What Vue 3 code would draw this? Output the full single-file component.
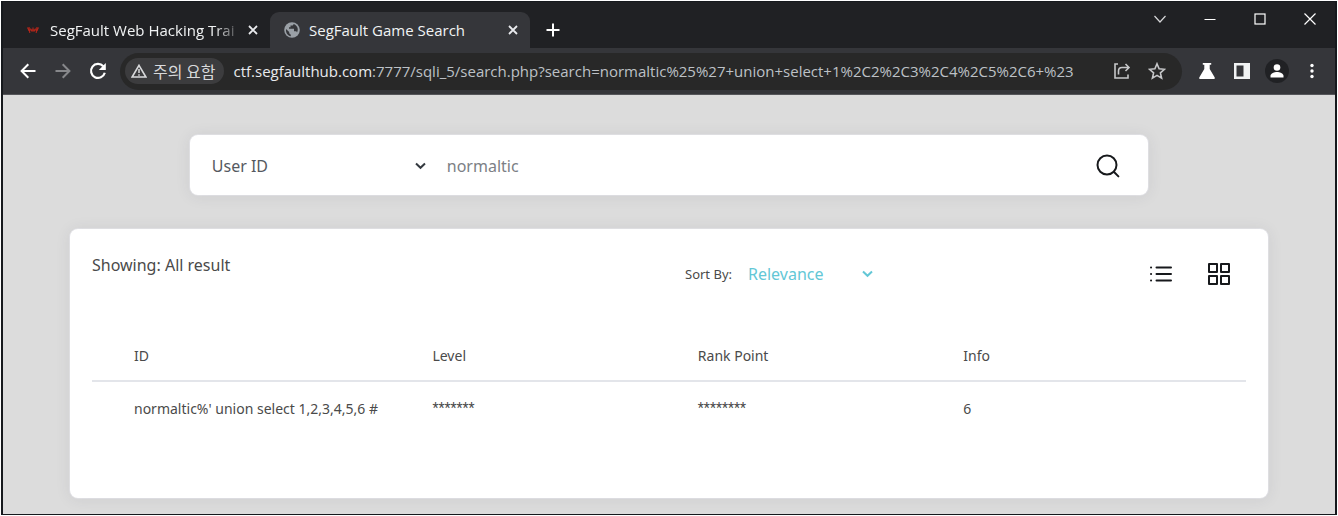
<script setup>
import { ref } from 'vue'

const field = ref('User ID')
const keyword = ref('')
const sort = ref('Relevance')
const address = ref('/sqli_5/search.php?search=normaltic%25%27+union+select+1%2C2%2C3%2C4%2C5%2C6+%23')
const columns = ['ID', 'Level', 'Rank Point', 'Info']
const rows = [["normaltic%' union select 1,2,3,4,5,6 #", '*******', '********', '6']]
const isMasked = (text) => /^\*+$/.test(text)
</script>

<template>
  <div class="window">
    <header class="tabstrip">
      <div class="tab">
        <svg class="favicon" viewBox="0 0 16 16" aria-hidden="true">
          <path d="M2.500 5.500l1.700 3.500M4 5l.8 6M5.500 6.500L7 9.500M8 5.500v4M10.500 6.500L9 9.500M12 5l-.8 6M13.500 5.500L11.800 9M3 8h10" fill="none" stroke="#b3261a" stroke-width="1.100" />
        </svg>
        <span class="tab-title fade">SegFault Web Hacking Trai</span>
        <button class="tab-close" aria-label="Close tab">
          <svg width="10" height="10" viewBox="0 0 10 10"><path d="M1 1l8 8M9 1l-8 8" stroke="#e8eaed" stroke-width="1.8" /></svg>
        </button>
      </div>
      <div class="tab active">
        <svg class="favicon" viewBox="0 0 16 16" aria-hidden="true">
          <circle cx="8" cy="8" r="7.8" fill="#9aa0a6" />
          <path d="M2 7l3.200 3v1.200l1.600 1.600v1.400C4 13.800 1.500 11 2 7zM9.500 2c0 1-.8 1.600-1.600 1.600H6.500V5.200H5v1.500h5v2.500h1.500c.8 0 1.300.5 1.500 1.200C14.800 7.500 13.500 3.200 9.500 2z" fill="#35363a" />
        </svg>
        <span class="tab-title">SegFault Game Search</span>
        <button class="tab-close" aria-label="Close tab">
          <svg width="10" height="10" viewBox="0 0 10 10"><path d="M1 1l8 8M9 1l-8 8" stroke="#e8eaed" stroke-width="1.8" /></svg>
        </button>
      </div>
      <button class="new-tab" aria-label="New tab">
        <svg width="14" height="14" viewBox="0 0 14 14"><path d="M7 0.500v13M0.500 7h13" stroke="#fff" stroke-width="2" /></svg>
      </button>
      <div class="caption">
        <button aria-label="Search tabs">
          <svg width="12" height="12" viewBox="0 0 12 12"><path d="M0.500 3l5.500 6 5.500-6" fill="none" stroke="#d5d6d8" stroke-width="1.200" /></svg>
        </button>
        <button aria-label="Minimize">
          <svg width="12" height="12" viewBox="0 0 12 12"><path d="M0.500 6.500h11" stroke="#fff" stroke-width="1" /></svg>
        </button>
        <button aria-label="Maximize">
          <svg width="12" height="12" viewBox="0 0 12 12"><rect x="1" y="1" width="10" height="10" fill="none" stroke="#fff" stroke-width="1.200" /></svg>
        </button>
        <button aria-label="Close">
          <svg width="12" height="12" viewBox="0 0 12 12"><path d="M0.500 0.500l11 11M11.500 0.500l-11 11" stroke="#fff" stroke-width="1.200" /></svg>
        </button>
      </div>
    </header>

    <nav class="toolbar">
      <div class="nav-buttons">
        <button aria-label="Back">
          <svg width="16" height="16" viewBox="0 0 16 16"><path d="M15.500 8H2M8.300 1.300L1.600 8l6.700 6.700" fill="none" stroke="#fff" stroke-width="2" /></svg>
        </button>
        <button aria-label="Forward">
          <svg width="16" height="16" viewBox="0 0 16 16"><path d="M0.500 8H14M7.700 1.300L14.400 8l-6.700 6.700" fill="none" stroke="#87888b" stroke-width="2" /></svg>
        </button>
        <button aria-label="Reload">
          <svg width="18" height="18" viewBox="0 0 18 18"><path d="M14.300 4.300A7 7 0 1 0 15.800 10.800" fill="none" stroke="#fff" stroke-width="2.200" /><path d="M16.800 1v7h-7z" fill="#fff" /></svg>
        </button>
      </div>
      <div class="omnibox">
        <button class="chip">
          <svg width="16" height="14" viewBox="0 0 16 14"><path d="M8 1.300L14.900 13H1.100z" fill="none" stroke="#d8d9db" stroke-width="1.600" /><path d="M8 5v4M8 10.200v1.500" stroke="#d8d9db" stroke-width="1.500" /></svg>
          <span>주의 요함</span>
        </button>
        <div class="url"><span class="host">ctf.segfaulthub.com</span>:7777{{ address }}</div>
        <button class="omni-action" aria-label="Share">
          <svg width="18" height="18" viewBox="0 0 18 18"><path d="M5 2H2v14h13v-3.500M5.500 12.500V9c0-2 1-3.500 3.500-3.500H15M12.500 2l3.500 3.500L12.500 9" fill="none" stroke="#c6c7c9" stroke-width="1.600" /></svg>
        </button>
        <button class="omni-action" aria-label="Bookmark">
          <svg width="18" height="18" viewBox="0 0 18 18"><path d="M9 1.800l2.100 5 5.400.5-4.100 3.600 1.200 5.300L9 13.400l-4.600 2.800 1.200-5.300-4.100-3.600 5.400-.5z" fill="none" stroke="#c6c7c9" stroke-width="1.600" /></svg>
        </button>
      </div>
      <div class="tools">
        <button aria-label="Experiments">
          <svg width="16" height="16" viewBox="0 0 16 16"><path d="M3.800 0h8.400v1.800h-1.500V6l4.900 8.200c.5.900.1 1.800-.8 1.800H1.200c-.9 0-1.300-.9-.8-1.800L5.300 6V1.800H3.800z" fill="#fff" /></svg>
        </button>
        <button aria-label="Side panel">
          <svg width="16" height="16" viewBox="0 0 16 16"><path d="M0 0h16v16H0zM2.500 2.500v11h7v-11z" fill="#f1f3f4" fill-rule="evenodd" /></svg>
        </button>
        <button aria-label="Profile">
          <svg width="24" height="24" viewBox="0 0 24 24"><circle cx="12" cy="12" r="12" fill="#202124" /><circle cx="12" cy="8.500" r="3.300" fill="#fff" /><path d="M5.500 18.500v-1.800c0-2.300 4-3.700 6.500-3.700s6.500 1.400 6.500 3.700v1.800z" fill="#fff" /></svg>
        </button>
        <button aria-label="Menu">
          <svg width="16" height="16" viewBox="0 0 16 16"><circle cx="8" cy="2.500" r="1.700" fill="#fff" /><circle cx="8" cy="8" r="1.700" fill="#fff" /><circle cx="8" cy="13.500" r="1.700" fill="#fff" /></svg>
        </button>
      </div>
    </nav>

    <main class="page">
      <form class="search" @submit.prevent>
        <div class="select-wrap field">
          <select v-model="field" aria-label="Search field">
            <option>User ID</option>
          </select>
          <svg width="11" height="8" viewBox="0 0 11 8"><path d="M1 1.500l4.500 4.300L10 1.500" fill="none" stroke="#343a40" stroke-width="2" /></svg>
        </div>
        <input v-model="keyword" type="text" placeholder="normaltic" aria-label="Search keyword" />
        <button class="search-button" aria-label="Search">
          <svg width="24" height="24" viewBox="0 0 24 24"><circle cx="11" cy="11" r="9.500" fill="none" stroke="#17191c" stroke-width="2" /><path d="M17.800 17.800l4.600 4.600" stroke="#17191c" stroke-width="2" stroke-linecap="round" /></svg>
        </button>
      </form>

      <section class="card">
        <div class="card-head">
          <p class="showing">Showing: All result</p>
          <div class="sort">
            <label for="sort">Sort By:</label>
            <div class="select-wrap sort-select">
              <select id="sort" v-model="sort">
                <option>Relevance</option>
              </select>
              <svg width="11" height="8" viewBox="0 0 11 8"><path d="M1 1.500l4.500 4.300L10 1.500" fill="none" stroke="#63c7d6" stroke-width="2" /></svg>
            </div>
          </div>
          <div class="views">
            <button aria-label="List view">
              <svg width="24" height="24" viewBox="0 0 24 24" fill="none" stroke="#17191c" stroke-width="2" stroke-linecap="round"><path d="M7.500 5.500H22M7.500 12H22M7.500 18.500H22M2 5.500h.1M2 12h.1M2 18.500h.1" /></svg>
            </button>
            <button aria-label="Grid view">
              <svg width="24" height="24" viewBox="0 0 24 24" fill="none" stroke="#17191c" stroke-width="2" stroke-linejoin="round"><path d="M2 2h8v8H2zM14 2h8v8h-8zM14 14h8v8h-8zM2 14h8v8H2z" /></svg>
            </button>
          </div>
        </div>
        <table>
          <thead>
            <tr><th v-for="c in columns" :key="c" scope="col">{{ c }}</th></tr>
          </thead>
          <tbody>
            <tr v-for="(row, i) in rows" :key="i">
              <td v-for="(cell, j) in row" :key="j" :class="{ masked: isMasked(cell) }">{{ cell }}</td>
            </tr>
          </tbody>
        </table>
      </section>
    </main>
  </div>
</template>

<style>
html,
body,
#app {
  height: 100%;
  margin: 0;
}
body {
  background: #fff;
}
</style>

<style scoped>
* {
  box-sizing: border-box;
}
button,
select,
input {
  font: inherit;
  color: inherit;
  background: none;
  border: 0;
  padding: 0;
  margin: 0;
}
button {
  display: flex;
  align-items: center;
  justify-content: center;
  flex: none;
}
svg {
  display: block;
  flex: none;
}
.window {
  display: flex;
  flex-direction: column;
  min-height: calc(100% - 2px);
  margin: 1px 1px 0;
  border: solid #16191d;
  border-width: 1px 2px;
  background: #dcdcdc;
  font-family: "Noto Sans", "Noto Sans CJK KR", sans-serif;
  color: #4a4a4a;
}

/* Tab strip */
.tabstrip {
  display: flex;
  align-items: flex-end;
  height: 46px;
  background: #202124;
  color: #f1f3f4;
  font-family: "Open Sans", "Noto Sans CJK KR", sans-serif;
  font-size: 15px;
}
.tab {
  display: flex;
  align-items: center;
  width: 267px;
  height: 36px;
  padding: 0 10px 0 22px;
}
.tab.active {
  width: 260px;
  padding-left: 14px;
  border-radius: 9px 9px 0 0;
  background: #35363a;
}
.favicon {
  width: 16px;
  height: 16px;
  margin-right: 9px;
}
.tab-title {
  flex: 1;
  white-space: nowrap;
}
.fade {
  mask-image: linear-gradient(to right, #000 84%, transparent 98%);
}
.tab-close {
  width: 14px;
  height: 14px;
}
.new-tab {
  width: 28px;
  height: 36px;
  margin-left: 9px;
}
.caption {
  display: flex;
  align-self: flex-start;
  margin-left: auto;
}
.caption button {
  width: 50px;
  height: 33px;
}

/* Toolbar */
.toolbar {
  display: flex;
  align-items: center;
  height: 47px;
  padding: 0 6px 0 7px;
  background: #35363a;
  border-bottom: 1px solid #55565a;
}
.nav-buttons {
  display: flex;
}
.nav-buttons button {
  width: 35px;
  height: 35px;
}
.omnibox {
  display: flex;
  align-items: center;
  flex: 1;
  min-width: 0;
  height: 37px;
  margin-left: 5px;
  padding: 0 8px 0 5px;
  border-radius: 19px;
  background: #282828;
  color: #bdc1c6;
  font-family: "Open Sans", "Noto Sans CJK KR", sans-serif;
  font-size: 15px;
}
.chip {
  gap: 6px;
  height: 26px;
  padding: 0 9px 0 6px;
  border-radius: 13px;
  background: #3c3c3e;
  color: #d8d9db;
  font-family: "Noto Sans CJK KR", sans-serif;
  font-size: 16px;
}
.url {
  flex: 1;
  min-width: 0;
  margin-left: 9px;
  overflow: hidden;
  white-space: nowrap;
}
.host {
  color: #e8eaed;
}
.omni-action {
  width: 35px;
  height: 35px;
}
.tools {
  display: flex;
  align-items: center;
  margin-left: 7px;
}
.tools button {
  width: 35px;
  height: 35px;
}

/* Page */
.page {
  flex: 1;
  padding: 40px 67px 16px;
}
.search,
.card {
  border-radius: 8px;
  background: #fff;
  box-shadow: 0 1px 16px rgba(60, 60, 80, 0.09), 0 0 0 1px rgba(235, 235, 240, 0.6);
}
.search {
  display: flex;
  align-items: center;
  width: 80%;
  height: 60px;
  margin: 0 auto;
  padding: 2px 22px 0;
  font-size: 16px;
  color: #55595f;
}
.select-wrap {
  display: grid;
  align-items: center;
}
.select-wrap > * {
  grid-area: 1 / 1;
}
.select-wrap svg {
  justify-self: end;
  pointer-events: none;
}
select {
  appearance: none;
  width: 100%;
}
.field {
  width: 214px;
}
.search input {
  flex: 1;
  min-width: 0;
  height: 40px;
  margin-left: 21px;
  outline: 0;
}
.search input::placeholder {
  color: #7c8085;
  opacity: 1;
}
.search-button {
  width: 36px;
  height: 40px;
}
.card {
  min-height: 269px;
  margin-top: 34px;
  padding: 22px;
}
.card-head {
  display: grid;
  grid-template-columns: 593px 1fr auto;
  height: 80px;
}
.showing {
  margin: 0;
  font-size: 16px;
  line-height: 28px;
}
.sort {
  display: flex;
  align-items: center;
  height: 46px;
  font-size: 13px;
}
.sort-select {
  width: 125px;
  margin-left: 16px;
  font-size: 16px;
  color: #63c7d6;
}
.views {
  display: flex;
  gap: 22px;
  padding-right: 9px;
}
.views button {
  width: 36px;
  height: 46px;
}
table {
  width: 100%;
  table-layout: fixed;
  border-collapse: collapse;
  font-size: 14px;
}
th,
td {
  width: 23%;
  height: 53px;
  padding: 0;
  font-weight: 400;
  text-align: left;
}
th {
  height: 50px;
  border-bottom: 2px solid #e3e5ea;
}
th:first-child,
td:first-child {
  width: 29.5%;
  padding-left: 42px;
}
th:last-child,
td:last-child {
  width: auto;
}
.masked {
  font-family: Roboto, sans-serif;
}
</style>
